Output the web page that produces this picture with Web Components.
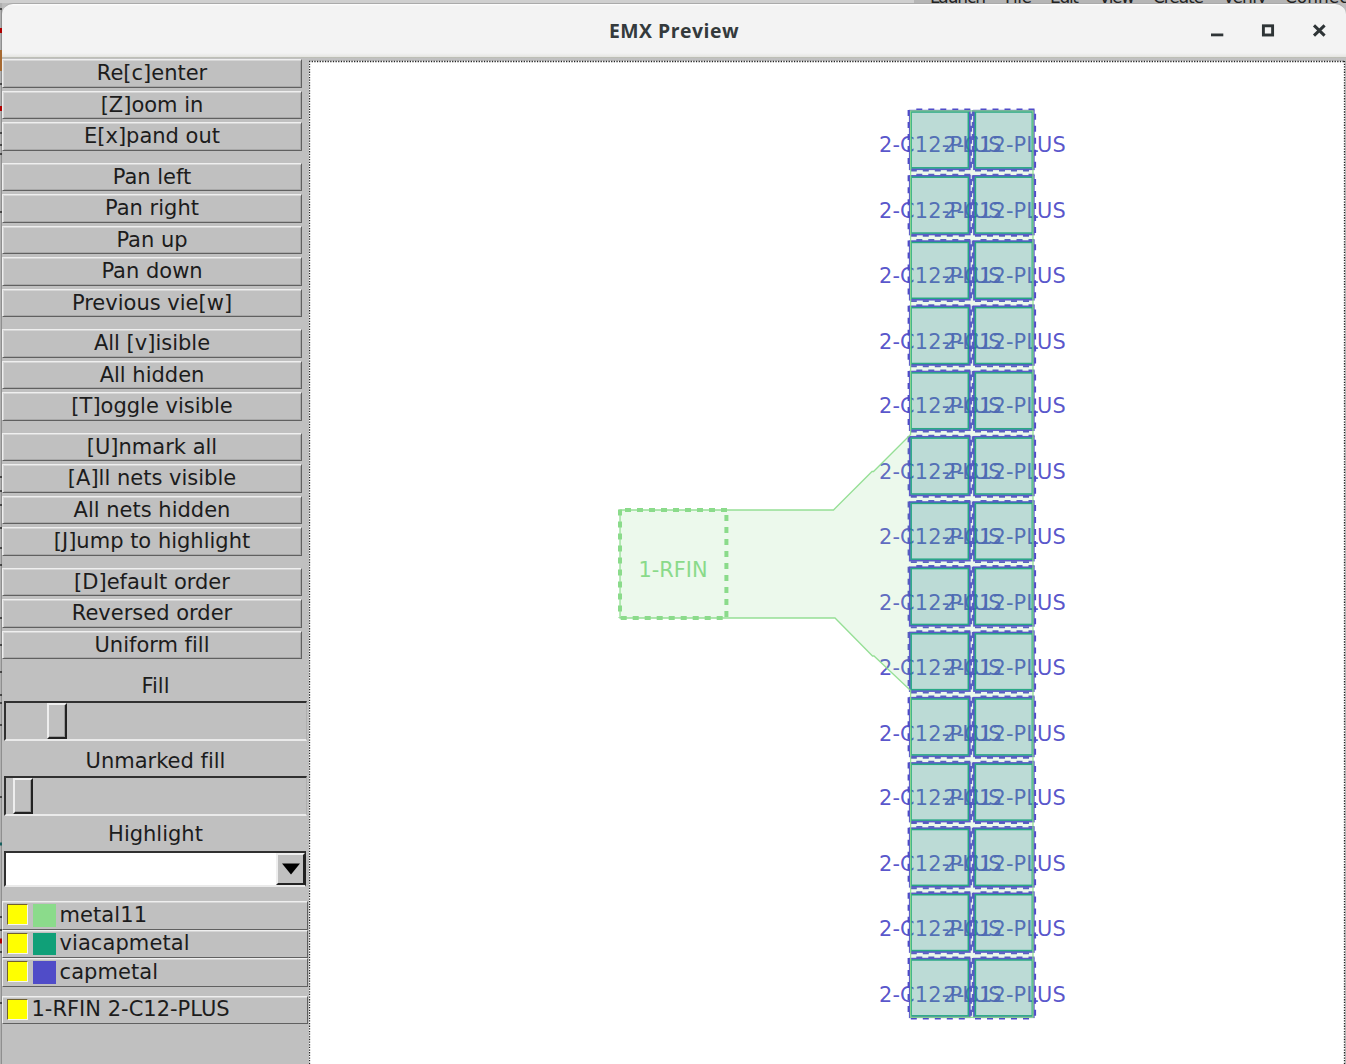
<!DOCTYPE html>
<html lang="en">
<head>
<meta charset="utf-8">
<title>EMX Preview</title>
<style>
html,body{margin:0;height:100%;overflow:hidden;background:#c0c0c0}
body{font-family:"DejaVu Sans",sans-serif;font-size:21px;color:#1c1c1c;font-variant-ligatures:none}
</style>
</head>
<body>
<emx-desktop></emx-desktop>
<script>
const define=(name,html,setup)=>customElements.define(name,class extends HTMLElement{
  constructor(){super();this.attachShadow({mode:'open'})}
  connectedCallback(){this.shadowRoot.innerHTML=html;if(setup)setup(this,this.shadowRoot)}
});

define('emx-button',`<style>
:host{display:block;flex:none;width:300px;height:28.5px;box-sizing:border-box;border:solid;border-width:1.5px;border-color:#efefef #606060 #606060 #efefef;box-shadow:inset 0 1px #d6d6d6,inset 1px 0 #d6d6d6,inset -1px -1px #a8a8a8;text-align:center;line-height:26px;white-space:nowrap}
</style><span><slot></slot></span>`);

define('emx-group',`<style>:host{display:flex;flex-direction:column;gap:3px;margin-bottom:12px}</style><slot></slot>`);

define('emx-scale',`<style>
:host{display:block}
.label{text-align:center}
.trough{width:303px;height:40px;box-sizing:border-box;margin-left:2px;border:solid;border-width:2px 1px 2px 2px;border-color:#303030 #b0b0b0 #eaeaea #303030;display:flex}
.thumb{width:20px;height:36px;box-sizing:border-box;border:solid;border-width:2px;border-color:#eee #222 #222 #eee;box-shadow:inset -1px -1px #999}
</style><div class="label"><slot></slot></div><div class="trough"><div class="thumb"></div></div>`,
(el,root)=>{root.querySelector('.thumb').style.marginLeft=el.getAttribute('value')+'px';
  root.querySelector('.label').style.height=el.getAttribute('head')+'px';
  root.querySelector('.label').style.lineHeight=el.getAttribute('line')+'px'});

define('emx-combo',`<style>
:host{display:block}
.label{height:35px;line-height:37px;text-align:center}
.box{margin-left:2px;width:302px;height:36px;box-sizing:border-box;border:solid;border-width:2px 1px 2px 2px;border-color:#303030 #222 #eaeaea #303030;background:#fff;display:flex;justify-content:flex-end}
.drop{width:29px;height:32px;box-sizing:border-box;background:#c0c0c0;border:solid;border-width:2px;border-color:#eee #222 #222 #eee;display:flex;align-items:center;justify-content:center}
svg{display:block;flex:none}
</style><div class="label"><slot></slot></div><div class="box"><div class="drop"><svg width="18" height="12"><path d="M0 .5H18L9 11.5Z" fill="#000"/></svg></div></div>`);

define('emx-layer',`<style>
:host{display:flex;align-items:center;width:306px;height:28.5px;box-sizing:border-box;border:solid;border-width:1.5px;border-color:#efefef #606060 #606060 #efefef;box-shadow:inset 0 1px #d6d6d6;white-space:nowrap}
.check{width:21px;height:21px;box-sizing:border-box;margin-left:4px;margin-top:-1px;margin-right:1px;background:#ff0;border:solid;border-width:1.5px;border-color:#706030 #f5f5f5 #f5f5f5 #706030}
.swatch{width:23px;height:22.5px;margin-left:3.5px;margin-right:4px}
.text{line-height:25px;margin-top:-.5px;letter-spacing:.08px}
.plain{margin-left:2.5px;letter-spacing:0}
</style><div class="check"></div><div class="swatch"></div><div class="text"><slot></slot></div>`,
(el,root)=>{const s=root.querySelector('.swatch'),c=el.getAttribute('color');
  if(c)s.style.background=c;else{s.remove();root.querySelector('.text').classList.add('plain')}});

define('emx-sidebar',`<style>
:host{display:flex;flex-direction:column;width:307px;flex:none;background:#c0c0c0}
.layers{padding-top:14px}.nets{padding-top:9px}
.scales{margin-top:-12px}
</style>
<emx-group><emx-button>Re[c]enter</emx-button><emx-button>[Z]oom in</emx-button><emx-button>E[x]pand out</emx-button></emx-group>
<emx-group><emx-button>Pan left</emx-button><emx-button>Pan right</emx-button><emx-button>Pan up</emx-button><emx-button>Pan down</emx-button><emx-button>Previous vie[w]</emx-button></emx-group>
<emx-group><emx-button>All [v]isible</emx-button><emx-button>All hidden</emx-button><emx-button>[T]oggle visible</emx-button></emx-group>
<emx-group><emx-button>[U]nmark all</emx-button><emx-button>[A]ll nets visible</emx-button><emx-button>All nets hidden</emx-button><emx-button>[J]ump to highlight</emx-button></emx-group>
<emx-group><emx-button>[D]efault order</emx-button><emx-button>Reversed order</emx-button><emx-button>Uniform fill</emx-button></emx-group>
<div class="scales"><emx-scale value="41" head="42" line="55">Fill</emx-scale><emx-scale value="6.5" head="35" line="41">Unmarked fill</emx-scale><emx-combo>Highlight</emx-combo></div>
<div class="layers"><emx-layer color="#8bdb8b">metal11</emx-layer><emx-layer color="#10a078">viacapmetal</emx-layer><emx-layer color="#504cc8">capmetal</emx-layer></div>
<div class="nets"><emx-layer>1-RFIN 2-C12-PLUS</emx-layer></div>`);

define('emx-canvas',`<style>
:host{display:block;flex:1;min-width:0;overflow:hidden}
svg{display:block}
text{font-family:"DejaVu Sans",sans-serif;font-size:20.9px}
</style><div></div>`,(el,root)=>{
  const purple='#504cc8',teal='#10a078',green='#8bdb8b';
  const mids=[144,210,275,341,405,471,536,602,667,733,797,863,928,994];
  let texts='',cells='',dash='';
  const line=(x1,y1,x2,y2,c,w,d)=>`<path d="M${x1} ${y1}L${x2} ${y2}" stroke="${c}" stroke-width="${w}" fill="none"${d?` stroke-dasharray="${d}"`:''}/>`;
  mids.forEach((m,i)=>{
    const top=110.7+i*65.23,h=58.5;
    [909.8,974].forEach((x,j)=>{
      const w=j?59.8:60;
      texts+=`<text x="${j?943.2:879}" y="${m+8}" fill="${purple}" fill-opacity=".94" textLength="122.6" lengthAdjust="spacing">2-C12-PLUS</text>`;
      dash+=line(x-1.2,top-.6,x-1.2,top+h,purple,2,'6 6')
        +line(x+w+1.3,top+3,x+w+1.3,top+h+2,purple,2,'6 6')
        +line(x+6.5,top-1.3,x+w+1,top-1.3,purple,1.8,'6 6')
        +line(x+1,top+h+1.5,x+w,top+h+1.5,purple,1.8,'6 6');
      cells+=`<rect x="${x}" y="${top}" width="${w}" height="${h}" fill="${teal}" fill-opacity=".16" stroke="${purple}" stroke-opacity=".9" stroke-width="1.8"/>
      <rect x="${x}" y="${top}" width="${w}" height="${h}" fill="${purple}" fill-opacity=".1"/>
      <rect x="${x+1.4}" y="${top+1.3}" width="${w-2.9}" height="${h-2.7}" fill="none" stroke="${teal}" stroke-opacity=".85" stroke-width="1.5"/>`;
    });
  });
  const metal='M620 510H833.5L872 471.5H873.5L910.6 434.5V110.8H1033V1017.3H910.6V690.5L874 656H872.5L835 618H620Z';
  root.querySelector('div').innerHTML=`<svg width="1037" height="1006" viewBox="309 58 1037 1006">
  <rect x="309" y="58" width="1037" height="3" fill="#c0c0c0"/><rect x="310" y="62" width="1034" height="1002" fill="#fff"/>
  <path d="M309 61.5H1344M309.5 61V1064M1344.5 61V1064" stroke="#fff"/>
  <path d="M309 61.5H1344M309.5 61V1064M1344.5 61V1064" stroke="#222" stroke-width="1.3" stroke-dasharray="1.3 1.35" fill="none"/>
  ${texts}<text x="638.6" y="576.5" fill="${green}" textLength="69" lengthAdjust="spacing">1-RFIN</text>
  ${dash}<path d="${metal}" fill="${green}" fill-opacity=".16"/>
  ${cells}<path d="${metal}" fill="none" stroke="#8bdb8b" stroke-opacity=".9" stroke-width="1.3"/>
  ${line(625,510,727.5,510,green,4,'6 6')}${line(620,509.5,620,618,green,4,'6 6')}${line(726.4,515,726.4,618,green,4,'6 6')}${line(620.7,618,727,618,green,4,'6 6')}
  </svg>`;
});

define('emx-titlebar',`<style>
:host{display:flex;align-items:center;height:55px;flex:none;box-sizing:border-box;background:linear-gradient(#fff 0,#f3f3f3 2px,#f3f3f3 49px,#e6e6e3 52.5px,#a9aba0 54px);border-radius:11px 11px 0 0;border-top:1px solid #aaa;padding-bottom:2px}
.side{flex:1 1 0;min-width:0;display:flex;justify-content:flex-end}
.title{font:bold 19.4px "Open Sans","Noto Sans",sans-serif;letter-spacing:.5px;color:#343a3c;white-space:nowrap}
svg{display:block;margin-right:19px}
</style><div class="side"></div><div class="title"><slot></slot></div><div class="side">
<svg width="116" height="20" fill="none" stroke="#2e3436"><path d="M0 14.9H12.3" stroke-width="2.8"/><rect x="52.4" y="5.8" width="9.2" height="9.2" stroke-width="2.9"/><path d="M103 5.3L113.6 15.6M113.6 5.3L103 15.6" stroke-width="3"/></svg></div>`);

define('emx-desktop',`<style>
:host{display:flex;flex-direction:column;width:1346px;height:1064px;overflow:hidden;background:#bdbdbd}
.menu{height:3px;flex:none;overflow:hidden;background:linear-gradient(90deg,#cfcfcf 0,#cfcfcf 914px,#b5b5b5 914px)}
.menu svg{display:block}
.body{flex:1;display:flex;min-height:0}
.edge{flex:none;width:2px}
.edge svg{display:block}
.window{flex:1;display:flex;flex-direction:column;min-width:0}
.content{display:flex;flex:1;min-height:0;background:#c0c0c0}
emx-sidebar{margin-top:1px}
</style>
<div class="menu"><svg width="1346" height="3" font-size="17" fill="#222"><g>
<text x="930" y="3" textLength="56">Launch</text><text x="1005" y="3" textLength="27">File</text><text x="1050" y="3" textLength="29">Edit</text><text x="1099" y="3" textLength="36">View</text><text x="1153" y="3" textLength="51">Create</text><text x="1223" y="3" textLength="44">Verify</text><text x="1285" y="3">Connectivity</text></g></svg></div>
<div class="body"><div class="edge"><svg width="2" height="1061" viewBox="0 3 2 1061"><path d="M0 3H3V1064H0Z" fill="#b0b0b0"/><path d="M1.6 10V1064" stroke="#8c8c8c"/>
<path d="M0 30.5H2M0 108.5H2M0 941H2" stroke="#b00000" stroke-width="5"/><path d="M0 50H2V71H0Z" fill="#a66a32"/><path d="M0 9H2M0 84H2M0 133H2M0 145H2M0 154H2M0 212H2M0 477H2M0 491H2M0 505H2M0 528H2M0 548H2M0 565H2M0 618H2M0 645H2M0 672H2M0 695H2M0 703H2M0 725H2M0 797H2M0 917H2M0 930H2M0 952H2M0 1003H2" stroke="#292929" stroke-width="1.5"/><path d="M0 844H2" stroke="#17605f" stroke-width="3"/></svg></div>
<div class="window"><emx-titlebar>EMX Preview</emx-titlebar><div class="content"><emx-sidebar></emx-sidebar><emx-canvas></emx-canvas></div></div></div>`);
</script>
</body>
</html>
